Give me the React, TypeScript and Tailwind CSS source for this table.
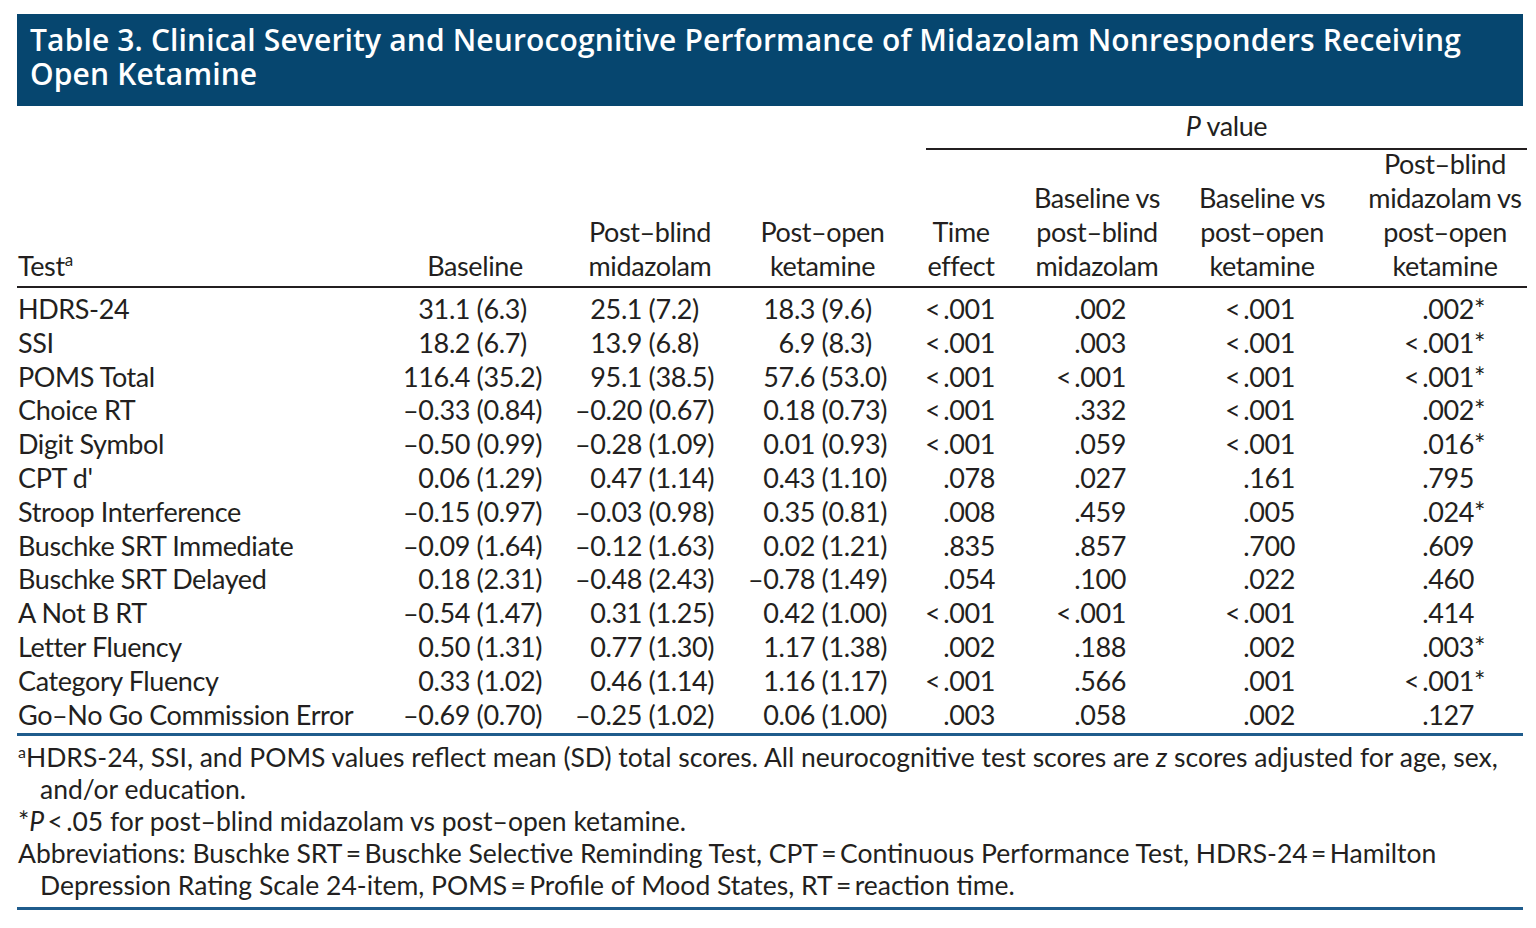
import React from "react";

const F = { fontFamily: "Lato, 'Open Sans', sans-serif" };
const LT = "<\u2009";
const FS = "\u2007";

type Row = [string, string, string, string, string, string, string, string, boolean];

const rows: Row[] = [
  ["HDRS-24", "31.1 (6.3)" + FS, "25.1 (7.2)" + FS, "18.3 (9.6)" + FS, LT + ".001", ".002", LT + ".001", ".002", true],
  ["SSI", "18.2 (6.7)" + FS, "13.9 (6.8)" + FS, FS + "6.9 (8.3)" + FS, LT + ".001", ".003", LT + ".001", LT + ".001", true],
  ["POMS Total", "116.4 (35.2)", "95.1 (38.5)", "57.6 (53.0)", LT + ".001", LT + ".001", LT + ".001", LT + ".001", true],
  ["Choice RT", "–0.33 (0.84)", "–0.20 (0.67)", "0.18 (0.73)", LT + ".001", ".332", LT + ".001", ".002", true],
  ["Digit Symbol", "–0.50 (0.99)", "–0.28 (1.09)", "0.01 (0.93)", LT + ".001", ".059", LT + ".001", ".016", true],
  ["CPT d'", "0.06 (1.29)", "0.47 (1.14)", "0.43 (1.10)", ".078", ".027", ".161", ".795", false],
  ["Stroop Interference", "–0.15 (0.97)", "–0.03 (0.98)", "0.35 (0.81)", ".008", ".459", ".005", ".024", true],
  ["Buschke SRT Immediate", "–0.09 (1.64)", "–0.12 (1.63)", "0.02 (1.21)", ".835", ".857", ".700", ".609", false],
  ["Buschke SRT Delayed", "0.18 (2.31)", "–0.48 (2.43)", "–0.78 (1.49)", ".054", ".100", ".022", ".460", false],
  ["A Not B RT", "–0.54 (1.47)", "0.31 (1.25)", "0.42 (1.00)", LT + ".001", LT + ".001", LT + ".001", ".414", false],
  ["Letter Fluency", "0.50 (1.31)", "0.77 (1.30)", "1.17 (1.38)", ".002", ".188", ".002", ".003", true],
  ["Category Fluency", "0.33 (1.02)", "0.46 (1.14)", "1.16 (1.17)", LT + ".001", ".566", ".001", LT + ".001", true],
  ["Go–No Go Commission Error", "–0.69 (0.70)", "–0.25 (1.02)", "0.06 (1.00)", ".003", ".058", ".002", ".127", false],
];

const grid = "grid grid-cols-[378px_160px_190px_155px_122px_150px_191px_164px]";

export default function App() {
  return (
    <div className="w-[1536px] h-[928px] bg-white text-[#231f20] overflow-hidden" style={F}>
      <div className="pt-[14px] pl-[17px] w-[1523px]">
        <div
          className="bg-[#06466f] text-white font-semibold text-[30px] leading-[34px] pl-[13px] pt-[9px] pb-[15px] w-[1506px] whitespace-nowrap tracking-[0.14px]"
          style={{ fontFamily: "'Open Sans', Lato, sans-serif" }}
        >
          <div className="h-[34px]">Table 3. Clinical Severity and Neurocognitive Performance of Midazolam Nonresponders Receiving</div>
          <div className="h-[34px]">Open Ketamine</div>
        </div>
      </div>

      <div className="pl-[17px] text-[27px] leading-[34px] tabular-nums tracking-[-0.4px]">
        {/* P value span */}
        <div className="flex pt-[3px]">
          <div className="w-[909px]" />
          <div className="w-[601px] text-center h-[39px]">
            <span className="italic">P</span> value
          </div>
        </div>
        <div className="flex">
          <div className="w-[909px]" />
          <div className="w-[601px] h-[2px] bg-[#231f20]" />
        </div>
        {/* Column headers */}
        <div className={grid + " items-end -mt-[3px] pb-[3px]"}>
          <div className="pl-[1px]">
            Test<sup className="text-[17px] relative -top-[10px]">a</sup>
          </div>
          <div className="text-center">Baseline</div>
          <div className="text-center">
            Post–blind
            <br />
            midazolam
          </div>
          <div className="text-center">
            Post–open
            <br />
            ketamine
          </div>
          <div className="text-center">
            Time
            <br />
            effect
          </div>
          <div className="text-center">
            Baseline vs
            <br />
            post–blind
            <br />
            midazolam
          </div>
          <div className="text-center pr-[11px]">
            Baseline vs
            <br />
            post–open
            <br />
            ketamine
          </div>
          <div className="text-center whitespace-nowrap">
            Post–blind
            <br />
            midazolam vs
            <br />
            post–open
            <br />
            ketamine
          </div>
        </div>
        <div className="w-[1510px] h-[2px] bg-[#231f20]" />
        {/* Body */}
        <div className="pt-[4px] pb-[2px]">
          {rows.map((r, i) => (
            <div key={i} className={grid + " leading-[33.8px] whitespace-nowrap"}>
              <div className="pl-[1px]">{r[0]}</div>
              <div className="text-right pr-[13px]">{r[1]}</div>
              <div className="text-right pr-[31px]">{r[2]}</div>
              <div className="text-right pr-[13px]">{r[3]}</div>
              <div className="text-right pr-[27px]">{r[4]}</div>
              <div className="text-right pr-[46px]">{r[5]}</div>
              <div className="text-right pr-[68px]">{r[6]}</div>
              <div className="text-right pr-[40px]">
                {r[7]}
                <span className="inline-block w-[13px] text-left">{r[8] ? "*" : ""}</span>
              </div>
            </div>
          ))}
        </div>
        <div className="w-[1506px] h-[3px] bg-[#1f5c8c]" />
        {/* Footnotes */}
        <div className="text-[26.5px] leading-[32px] pt-[5px] pb-[6px] pl-[1px] whitespace-nowrap tracking-normal">
          <div>
            <sup className="text-[16px] relative -top-[9px]">a</sup>HDRS-24, SSI, and POMS values reflect mean (SD) total scores. All neurocognitive test scores are{" "}
            <span className="italic">z</span> scores adjusted for age, sex,
          </div>
          <div className="pl-[22px]">and/or education.</div>
          <div>
            *<span className="italic">P</span>
            {"\u2009<\u2009"}.05 for post–blind midazolam vs post–open ketamine.
          </div>
          <div>
            Abbreviations: Buschke SRT{"\u2009=\u2009"}Buschke Selective Reminding Test, CPT{"\u2009=\u2009"}Continuous Performance Test,
            HDRS-24{"\u2009=\u2009"}Hamilton
          </div>
          <div className="pl-[22px]">
            Depression Rating Scale 24-item, POMS{"\u2009=\u2009"}Profile of Mood States, RT{"\u2009=\u2009"}reaction time.
          </div>
        </div>
        <div className="w-[1506px] h-[3px] bg-[#1f5c8c]" />
      </div>
    </div>
  );
}
